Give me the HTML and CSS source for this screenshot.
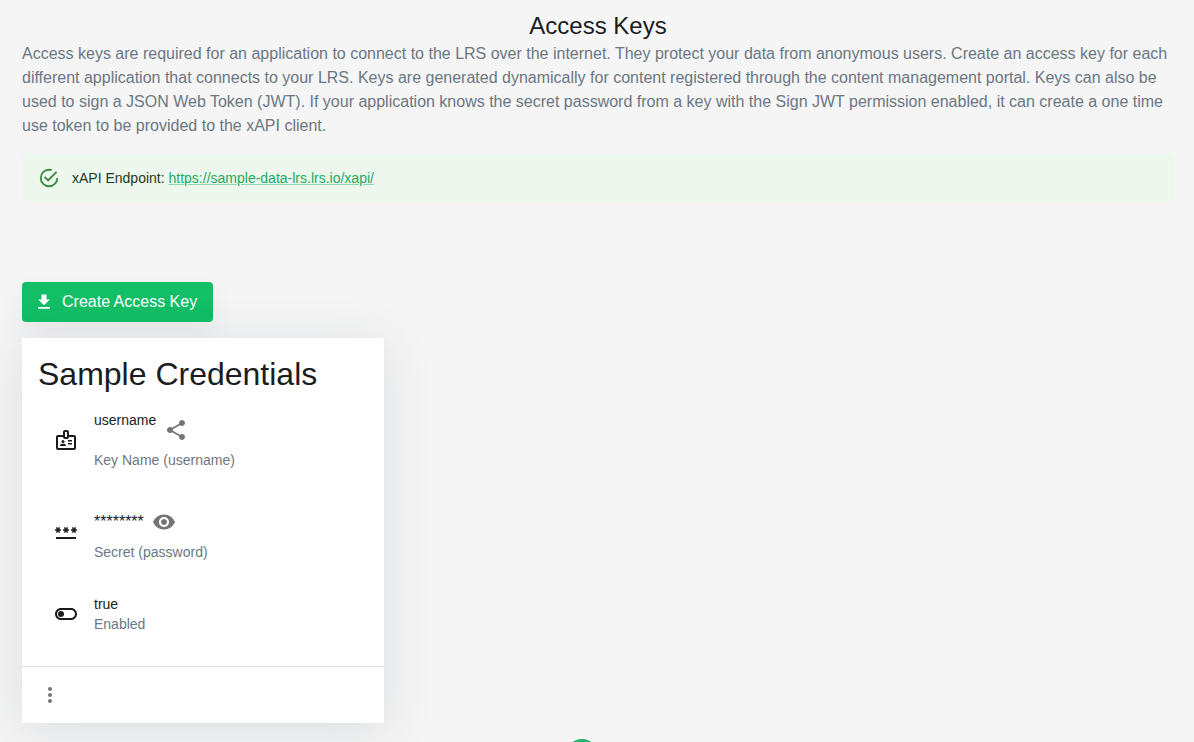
FILE: index.html
```html
<!DOCTYPE html>
<html lang="en">
<head>
<meta charset="utf-8">
<meta name="viewport" content="width=device-width, initial-scale=1">
<title>Access Keys</title>
<link rel="stylesheet" href="styles.css">
</head>
<body>
<main class="page">
  <h1 class="page-title">Access Keys</h1>
  <p class="intro">Access keys are required for an application to connect to the LRS over the internet. They protect your data from anonymous users. Create an access key for each different application that connects to your LRS. Keys are generated dynamically for content registered through the content management portal. Keys can also be used to sign a JSON Web Token (JWT). If your application knows the secret password from a key with the Sign JWT permission enabled, it can create a one time use token to be provided to the xAPI client.</p>

  <div class="alert">
    <svg class="alert-icon" viewBox="0 0 24 24" aria-hidden="true"><path d="M20,12A8,8 0 0,1 12,20A8,8 0 0,1 4,12A8,8 0 0,1 12,4C12.76,4 13.5,4.11 14.2,4.31L15.77,2.74C14.61,2.26 13.34,2 12,2A10,10 0 0,0 2,12A10,10 0 0,0 12,22A10,10 0 0,0 22,12M7.91,10.08L6.5,11.5L11,16L21,6L19.59,4.58L11,13.17L7.91,10.08Z"/></svg>
    <div>xAPI Endpoint: <a class="link" href="https://sample-data-lrs.lrs.io/xapi/">https://sample-data-lrs.lrs.io/xapi/</a></div>
  </div>

  <button class="create-button" type="button">
    <svg class="create-icon" viewBox="0 0 24 24" aria-hidden="true"><path d="M19 9h-4V3H9v6H5l7 7 7-7zM5 18v2h14v-2H5z"/></svg>
    Create Access Key
  </button>

  <section class="card">
    <div class="card-body">
      <h2 class="card-title">Sample Credentials</h2>
      <ul class="fields">
        <li class="field">
          <svg class="icon" viewBox="0 0 24 24" aria-hidden="true"><path fill-rule="evenodd" d="M20 7h-5V4c0-1.1-.9-2-2-2h-2c-1.1 0-2 .9-2 2v3H4c-1.1 0-2 .9-2 2v11c0 1.1.9 2 2 2h16c1.1 0 2-.9 2-2V9c0-1.1-.9-2-2-2zm-9-3h2v5h-2V4zm9 16H4V9h5c0 1.1.9 2 2 2h2c1.1 0 2-.9 2-2h5v11z"/><circle cx="9" cy="13.5" r="1.5"/><path d="M11.08 16.18C10.44 15.9 9.74 15.75 9 15.75s-1.44.15-2.08.43c-.56.24-.92.78-.92 1.39V18h6v-.43c0-.61-.36-1.15-.92-1.39zM14 15h4v1.5h-4zM14 12h4v1.5h-4z"/></svg>
          <div>
            <div class="value value-top">username
              <button class="icon-button" type="button" aria-label="Share">
                <svg class="icon" viewBox="0 0 24 24" aria-hidden="true"><path d="M18 16.08c-.76 0-1.44.3-1.96.77L8.91 12.7c.05-.23.09-.46.09-.7s-.04-.47-.09-.7l7.05-4.11c.54.5 1.25.81 2.04.81 1.66 0 3-1.34 3-3s-1.34-3-3-3-3 1.34-3 3c0 .24.04.47.09.7L8.04 9.81C7.5 9.31 6.79 9 6 9c-1.66 0-3 1.34-3 3s1.34 3 3 3c.79 0 1.5-.31 2.04-.81l7.12 4.16c-.05.21-.08.43-.08.65 0 1.61 1.31 2.92 2.92 2.92s2.92-1.31 2.92-2.92-1.31-2.92-2.92-2.92z"/></svg>
              </button>
            </div>
            <div class="caption">Key Name (username)</div>
          </div>
        </li>
        <li class="field">
          <svg class="icon" viewBox="0 0 24 24" aria-hidden="true"><path d="M2 17h20v2H2v-2zm1.15-4.05L4 11.47l.85 1.48 1.3-.75-.85-1.48H7v-1.5H5.3l.85-1.47L4.85 7 4 8.47 3.15 7l-1.3.75.85 1.47H1v1.5h1.7l-.85 1.48 1.3.75zm6.7-.75l1.3.75.85-1.48.85 1.48 1.3-.75-.85-1.48H15v-1.5h-1.7l.85-1.47-1.3-.75L12 8.47 11.15 7l-1.3.75.85 1.47H9v1.5h1.7l-.85 1.48zM23 9.22h-1.7l.85-1.47-1.3-.75L20 8.47 19.15 7l-1.3.75.85 1.47H17v1.5h1.7l-.85 1.48 1.3.75.85-1.48.85 1.48 1.3-.75-.85-1.48H23v-1.5z"/></svg>
          <div>
            <div class="value value-secret">********
              <button class="icon-button" type="button" aria-label="Show secret">
                <svg class="icon" viewBox="0 0 24 24" aria-hidden="true"><path d="M12 4.5C7 4.5 2.73 7.61 1 12c1.73 4.39 6 7.5 11 7.5s9.27-3.11 11-7.5c-1.73-4.39-6-7.5-11-7.5zM12 17c-2.76 0-5-2.24-5-5s2.24-5 5-5 5 2.24 5 5-2.24 5-5 5zm0-8c-1.66 0-3 1.34-3 3s1.34 3 3 3 3-1.34 3-3-1.34-3-3-3z"/></svg>
              </button>
            </div>
            <div class="caption">Secret (password)</div>
          </div>
        </li>
        <li class="field">
          <svg class="icon" viewBox="0 0 24 24" aria-hidden="true"><path fill-rule="evenodd" d="M17 6H7c-3.31 0-6 2.69-6 6s2.69 6 6 6h10c3.31 0 6-2.69 6-6s-2.69-6-6-6zm0 10H7c-2.21 0-4-1.79-4-4s1.79-4 4-4h10c2.21 0 4 1.79 4 4s-1.79 4-4 4z"/><circle cx="7" cy="12" r="3"/></svg>
          <div>
            <div class="value">true</div>
            <div class="caption">Enabled</div>
          </div>
        </li>
      </ul>
    </div>
    <div class="card-actions">
      <button class="icon-button" type="button" aria-label="More actions">
        <svg class="icon" viewBox="0 0 24 24" aria-hidden="true"><path d="M12 8c1.1 0 2-.9 2-2s-.9-2-2-2-2 .9-2 2 .9 2 2 2zm0 2c-1.1 0-2 .9-2 2s.9 2 2 2 2-.9 2-2-.9-2-2-2zm0 6c-1.1 0-2 .9-2 2s.9 2 2 2 2-.9 2-2-.9-2-2-2z"/></svg>
      </button>
    </div>
  </section>
</main>
<div class="floating-dot"></div>
</body>
</html>
```
FILE: styles.css
```css
* {
  box-sizing: border-box;
}

body {
  margin: 0;
  background: #f5f5f5;
  color: #1a1c1e;
  font-family: "Liberation Sans", Arial, sans-serif;
  font-size: 14px;
  line-height: 20px;
}

button {
  border: 0;
  font-family: inherit;
  cursor: pointer;
}

.page {
  display: flex;
  flex-direction: column;
  align-items: flex-start;
  min-height: 100vh;
  padding: 10px 20px 16px 22px;
}

.page-title {
  align-self: stretch;
  margin: 0;
  font-size: 24px;
  font-weight: 400;
  line-height: 32px;
  text-align: center;
}

.intro {
  margin: 0 0 16px;
  color: #6b7783;
  font-size: 16px;
  line-height: 24px;
}

.alert {
  display: flex;
  align-self: stretch;
  align-items: center;
  gap: 12px;
  min-height: 48px;
  margin-bottom: 80px;
  padding: 8px 16px;
  border-radius: 4px;
  background: #edf7ed;
  color: #1e3a20;
}

.alert-icon {
  flex: none;
  width: 22px;
  height: 22px;
  fill: #3a8a40;
}

.link {
  color: #21ab62;
  text-decoration-color: #90d5b1;
}

.create-button {
  display: flex;
  align-items: center;
  gap: 8px;
  min-height: 40px;
  margin-bottom: 16px;
  padding: 8px 16px 8px 12px;
  border-radius: 4px;
  background: #12be66;
  box-shadow: 0 12px 28px rgba(40, 55, 80, 0.06);
  color: #fff;
  font-size: 16px;
  line-height: 24px;
}

.create-icon {
  width: 20px;
  height: 20px;
  fill: currentColor;
}

.card {
  width: 100%;
  max-width: 362px;
  background: #fff;
  box-shadow: 0 8px 48px rgba(40, 55, 80, 0.12);
}

.card-body {
  padding: 16px;
}

.card-title {
  margin: 0;
  font-size: 32px;
  font-weight: 400;
  line-height: 40px;
}

.fields {
  margin: 0;
  padding: 0;
  list-style: none;
}

.field {
  display: flex;
  align-items: center;
  gap: 16px;
  padding: 16px;
}

.icon {
  display: block;
  flex: none;
  width: 24px;
  height: 24px;
  fill: currentColor;
}

.value {
  display: flex;
  align-items: center;
}

.value-top {
  align-items: flex-start;
}

.value-secret {
  font-size: 16px;
}

.caption {
  color: #6b7783;
}

.icon-button {
  padding: 8px;
  border-radius: 50%;
  background: transparent;
  color: #757575;
}

.card-actions {
  display: flex;
  padding: 8px;
  border-top: 1px solid #e0e0e0;
}

.floating-dot {
  position: fixed;
  bottom: -29px;
  left: calc(50% - 31px);
  width: 32px;
  height: 32px;
  border-radius: 50%;
  background: #21b368;
}
```
